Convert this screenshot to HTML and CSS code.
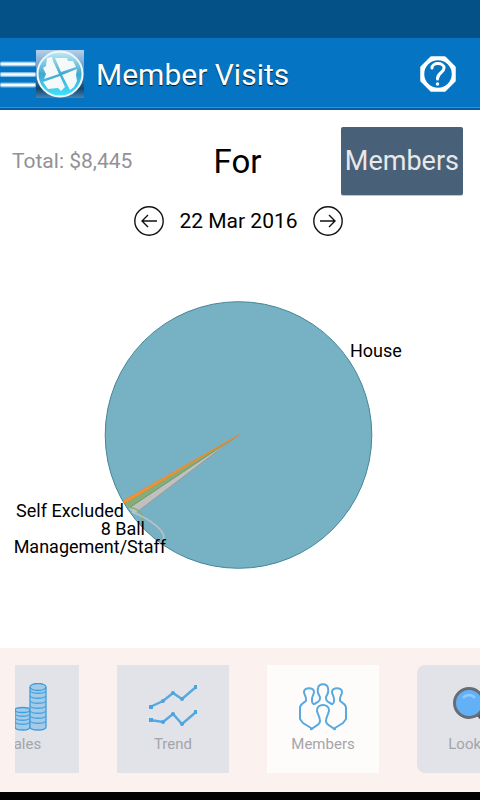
FILE: index.html
```html
<!DOCTYPE html>
<html lang="en">
<head>
    <meta charset="UTF-8">
    <meta name="viewport" content="width=device-width, initial-scale=1.0">
    <title>Member Visits</title>
    <link rel="stylesheet" href="styles.css">
</head>
<body>
    <div class="status-bar"></div>
    <header class="header">
        <button class="icon-button menu" aria-label="Menu">
            <svg width="36" height="48" viewBox="0 0 36 48">
                <g stroke="#7dbce8" stroke-width="5" stroke-linecap="round">
                    <path d="M2 14H34M2 24.500H34M2 35H34"/>
                </g>
                <g stroke="#f4faff" stroke-width="2.500" stroke-linecap="round">
                    <path d="M2 14H34M2 24.500H34M2 35H34"/>
                </g>
            </svg>
        </button>
        <svg class="logo" width="48" height="48" viewBox="0 0 48 48">
            <defs>
                <linearGradient id="logo-back" x1="0" y1="0" x2="0" y2="1">
                    <stop offset="0" stop-color="#b5cfe9"/>
                    <stop offset="0.5" stop-color="#4b8fc4"/>
                    <stop offset="0.8" stop-color="#12456f"/>
                    <stop offset="1" stop-color="#4383b2"/>
                </linearGradient>
                <linearGradient id="logo-disc" x1="0" y1="0" x2="0" y2="1">
                    <stop offset="0" stop-color="#c4ecf5"/>
                    <stop offset="0.5" stop-color="#3fa9cf"/>
                    <stop offset="1" stop-color="#42e2ff"/>
                </linearGradient>
            </defs>
            <rect width="48" height="48" fill="url(#logo-back)"/>
            <circle cx="24" cy="24" r="22.500" fill="url(#logo-disc)" stroke="#eef8fc" stroke-width="2"/>
            <g fill="#f5f9fa">
                <path d="M11 8L16 7L17 11L23 24L8 29L10 24L7 18L10 16Z"/>
                <path d="M19 8L31 8L32 11L37 11L40 17L25 22Z"/>
                <path d="M26 25L41 19L40 25L41 31L38 37L34 40Z"/>
                <path d="M7 32L24 26L29 37L25 41L22 38L12 39Z"/>
            </g>
        </svg>
        <h1 class="title">Member Visits</h1>
        <button class="icon-button help" aria-label="Help">
            <svg width="36" height="36" viewBox="0 0 36 36" fill="none" stroke="#fff">
                <path d="M11.500 2H24.500L34 11.500V24.500L24.500 34H11.500L2 24.500V11.500Z" stroke-width="3.500" stroke-linejoin="round"/>
                <circle cx="18" cy="18" r="15" stroke-width="2.500"/>
                <path d="M12 12C12 6 24 6 24 12C24 17 17.500 16 17.500 23" stroke-width="3" stroke-linecap="round"/>
                <circle cx="17.500" cy="28" r="1" stroke-width="1.500"/>
            </svg>
        </button>
    </header>

    <main class="content">
        <div class="filter">
            <span class="total">Total: $8,445</span>
            <span class="for">For</span>
            <button class="group">Members</button>
        </div>
        <div class="date-row">
            <button class="icon-button" aria-label="Previous day">
                <svg width="30" height="30" viewBox="0 0 30 30" fill="none" stroke="#111" stroke-width="1.400">
                    <circle cx="15" cy="15" r="14.200"/>
                    <path d="M23 15H8M14 9L8 15L14 21"/>
                </svg>
            </button>
            <span class="date">22 Mar 2016</span>
            <button class="icon-button" aria-label="Next day">
                <svg width="30" height="30" viewBox="0 0 30 30" fill="none" stroke="#111" stroke-width="1.400">
                    <circle cx="15" cy="15" r="14.200"/>
                    <path d="M7 15H22M16 9L22 15L16 21"/>
                </svg>
            </button>
        </div>
        <svg class="chart" viewBox="0 0 480 300" role="img" aria-label="Visits by member type">
            <circle cx="238.500" cy="149" r="133.300" fill="#77b2c4" stroke="#438697"/>
            <!-- management, 8 ball, self excluded -->
            <path d="M238.500 149L137 226L129 222Z" fill="#c0c0c0"/>
            <path d="M238.500 149L137 226" stroke="#999"/>
            <path d="M238.500 149L129 222L125 217Z" fill="#83ad7b"/>
            <path d="M238.500 149L129 222" stroke="#6f9d69"/>
            <path d="M238.500 149L125 217L123 215Z" fill="#f79437" stroke="#ee8a2c"/>
            <path d="M129 222L133 226L137 226Z" fill="#c0c0c0" stroke="#c0c0c0"/>
            <path d="M128 221C140 223 145 228 142 236" fill="none" stroke="#83b07b" stroke-width="1.500"/>
            <path d="M132 226C150 233 168 246 163 254L160 256" fill="none" stroke="#bdc2c4" stroke-width="1.500"/>
            <text x="350" y="71">House</text>
            <text x="124" y="231" text-anchor="end">Self Excluded</text>
            <text x="145" y="249" text-anchor="end">8 Ball</text>
            <text x="166" y="267" text-anchor="end">Management/Staff</text>
        </svg>
    </main>

    <nav class="tabs">
        <div class="track">
            <a class="tab" href="#sales">
                <svg width="48" height="48" viewBox="0 0 48 48" fill="#a3cbe8" stroke="#3d9ddd" stroke-width="1.300">
                    <path d="M1 22V44C1 48 15 48 15 44V22"/>
                    <ellipse cx="8" cy="20" rx="7" ry="3"/>
                    <path d="M16 27V44C16 48 31 48 31 44V27"/>
                    <ellipse cx="23.500" cy="27" rx="7.500" ry="2.500"/>
                    <path d="M31 4V44C31 48 47 48 47 44V4"/>
                    <ellipse cx="39" cy="4" rx="8" ry="3.500"/>
                    <path d="M31 8C33 11 45 11 47 8M31 13C33 16 45 16 47 13M31 18C33 21 45 21 47 18M31 23C33 26 45 26 47 23M31 28C33 31 45 31 47 28M31 33C33 36 45 36 47 33M31 38C33 41 45 41 47 38M16 31C18 34 29 34 31 31M16 35C18 38 29 38 31 35M16 39C18 42 29 42 31 39" stroke="#4aa3df"/>
                </svg>
                <span>Sales</span>
            </a>
            <a class="tab" href="#trend">
                <svg width="48" height="48" viewBox="0 0 48 48" fill="none" stroke="#57a8e0" stroke-width="2.400">
                    <path d="M1 24L14 18L24 10L33 16L47 4M1 37L14 39L24 31L33 41L47 29"/>
                    <g fill="#4ba3df" stroke="none">
                        <path d="M0 22H4V26H0ZM0 35H4V39H0ZM45 2H48V6H45ZM45 27H48V31H45Z"/>
                        <circle cx="14" cy="18" r="2"/>
                        <circle cx="24" cy="10" r="2"/>
                        <circle cx="33" cy="16" r="2"/>
                        <circle cx="14" cy="39" r="2"/>
                        <circle cx="24" cy="31" r="2"/>
                        <circle cx="33" cy="41" r="2"/>
                    </g>
                </svg>
                <span>Trend</span>
            </a>
            <a class="tab active" href="#members">
                <svg width="48" height="48" viewBox="0 0 48 48" fill="none" stroke="#57a9e1" stroke-width="2" stroke-linejoin="round">
                    <!-- shoulders and the three heads behind -->
                    <path d="M12 47V45L4 40L1 36V24C2 21 4 20 7 18C8 14 5 12 5 9C5 4 15 4 15 9C15 12 12 14 13 18C13 21 15 22 17 20C21 18 21 17 21 14C19 11 18 9 19 5C20 0 28 0 29 5C30 9 29 11 27 14C27 17 27 18 31 20C33 22 35 21 35 18C36 14 33 12 33 9C33 4 43 4 43 9C43 12 40 14 41 18C44 20 46 21 47 24V36L44 40L36 45V47"/>
                    <!-- person in front -->
                    <path d="M12 47C14 43 21 43 21 38C21 34 19 32 18 28C17 20 31 20 30 28C29 32 27 34 27 38C27 43 34 43 36 47"/>
                </svg>
                <span>Members</span>
            </a>
            <a class="tab rounded" href="#lookup">
                <svg width="48" height="48" viewBox="0 0 48 48">
                    <path d="M30 31L43 44" stroke="#555b61" stroke-width="6" stroke-linecap="round"/>
                    <circle cx="20" cy="20" r="14.500" fill="#62b1f6" stroke="#666d75" stroke-width="3"/>
                    <path d="M14 15C17 11 23 11 26 15" fill="none" stroke="#8dcaff" stroke-width="2.500"/>
                </svg>
                <span>Lookup</span>
            </a>
        </div>
    </nav>
    <div class="bottom-bar"></div>
</body>
</html>
```
FILE: styles.css
```css
* {
    box-sizing: border-box;
}
body {
    margin: 0;
    min-height: 100vh;
    display: flex;
    flex-direction: column;
    font-family: Roboto, sans-serif;
    background-color: #fff;
    color: #000;
}
svg {
    display: block;
}
button {
    font-family: inherit;
    cursor: pointer;
}
.status-bar {
    height: 38px;
    background-color: #035187;
}
.header {
    height: 72px;
    padding-top: 2px;
    display: flex;
    align-items: center;
    background-color: #0575c3;
    border-bottom: 2px solid #055da8;
    box-shadow: inset 0 -1px #3490d5;
}
.icon-button {
    padding: 0;
    border: none;
    background: none;
}
.title {
    flex: 1;
    margin: 0 0 0 12px;
    font-size: 30px;
    font-weight: 400;
    color: #fff;
    text-shadow: 0 1px 1px rgba(0, 0, 0, 0.8);
}
.help {
    margin-right: 24px;
}
.content {
    flex: 1;
    padding-top: 17px;
}
.filter {
    display: grid;
    grid-template-columns: 1fr auto 1fr;
    align-items: center;
    padding: 0 17px 0 12px;
}
.total {
    font-size: 21px;
    color: #919196;
}
.for {
    font-size: 33px;
}
.group {
    justify-self: end;
    height: 68px;
    padding: 0 4px;
    border: none;
    border-radius: 2px;
    background-color: #486178;
    box-shadow: 0 1px #c4c4c4;
    color: #e8e8e8;
    font-size: 27px;
}
.date-row {
    display: flex;
    justify-content: center;
    align-items: center;
    gap: 15px;
    margin-top: 11px;
    padding-right: 3px;
}
.date {
    font-size: 21px;
}
.chart {
    width: 100%;
    margin-top: 50px;
    font-size: 18px;
}
.tabs {
    padding: 17px 0 19px 15px;
    background-color: #fbf2ef;
}
.track {
    display: flex;
    gap: 38px;
    overflow: hidden;
}
.tab {
    flex: none;
    width: 112px;
    height: 108px;
    padding-top: 18px;
    display: flex;
    flex-direction: column;
    align-items: center;
    gap: 4px;
    background-color: #e1e3e9;
    color: #a5a5a8;
    font-size: 15px;
    line-height: 18px;
    text-decoration: none;
}
/* the row is scrolled a little past the first tab */
.tab:first-child {
    margin-left: -48px;
}
.active {
    background-color: #fefcfb;
}
.rounded {
    border-radius: 8px;
}
.bottom-bar {
    height: 8px;
    background-color: #000;
}
```
